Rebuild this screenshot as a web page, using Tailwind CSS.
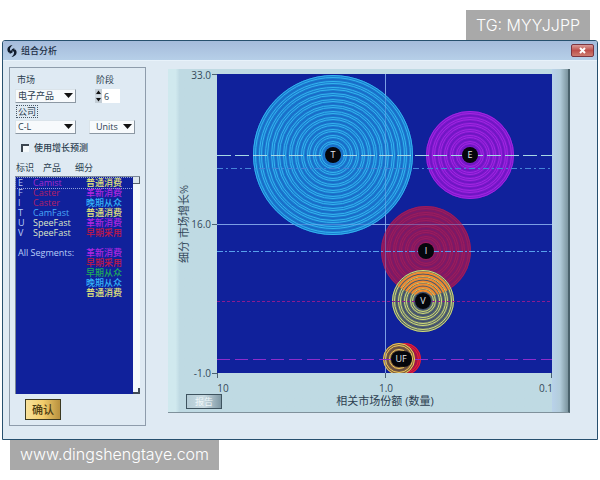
<!DOCTYPE html>
<html lang="zh-CN">

<head>
    <meta charset="UTF-8">
    <title>组合分析</title>
    <script src="https://cdn.jsdelivr.net/npm/@tailwindcss/browser@4"></script>
</head>

<body class="bg-white font-['Open_Sans','Noto_Sans_CJK_SC',sans-serif] text-[9px] leading-[10px] text-[#2c3e50]">
    <header class="flex justify-end pt-[10px] pr-[10px]">
        <div class="bg-[#a9a9a9] text-white h-[30px] px-[10px] text-[16px] leading-[30px] font-['Inter','Liberation_Sans',sans-serif] font-light">TG: MYYJJPP</div>
    </header>

    <main class="mx-[2px] border border-[#27506e] rounded-t-[3px] bg-[#dfeaf3] overflow-hidden">
        <!-- Title bar -->
        <div class="flex items-center h-[19px] pl-[4px] pr-[3px] bg-linear-to-b from-[#a5bbdb] to-[#b6cfe8]">
            <svg class="w-[10px] h-[12px] mr-[4px]" viewBox="0 0 10 12" fill="#111c2c">
                <path d="M5.500 0C1.500 .8 0 3 .5 5.500C.8 7 1.800 7.800 3 7.800L2.500 9L5.500 7.500L4.500 4.500L3.800 5.800C2.500 5.500 2.500 2.500 5.500 0Z" />
                <path d="M4.500 12C8.500 11.200 10 9 9.500 6.500C9.200 5 8.200 4.200 7 4.200L7.500 3L4.800 4.200L5.800 7.500L6.300 6.200C7.500 6.500 7.500 9.500 4.500 12Z" />
            </svg>
            <h1 class="grow font-medium text-[#1d3047]">组合分析</h1>
            <button aria-label="关闭" class="flex items-center justify-center w-[23px] h-[13px] border border-[#7b3540] rounded-[2px] bg-linear-to-b from-[#d99a98] via-[#bd4f4b] to-[#cc7b70]">
                <svg class="w-[7px] h-[7px]" viewBox="0 0 7 7" stroke="#fff" stroke-width="2">
                    <path d="M1 1L6 6M6 1L1 6" />
                </svg>
            </button>
        </div>

        <div class="flex items-start gap-[22px] pl-[6px] pr-[27px] pt-[6px] pb-[13px] border-t border-[#e8f2fa]">
            <!-- Settings -->
            <form class="flex flex-col shrink-0 w-[137px] border border-[#8e9cab] pt-[5px] px-[5px] pb-[5px]">
                <div class="grid grid-cols-[74px_1fr] gap-y-[2px]">
                    <label for="market" class="h-[14px] leading-[14px] pl-[2px]">市场</label>
                    <label for="period" class="h-[14px] leading-[14px] pl-[7px]">阶段</label>

                    <div class="relative w-[61px]">
                        <select id="market" class="block appearance-none w-full h-[14px] pl-[2px] leading-[12px] bg-[#f7fafc] border border-[#dbe4ea] border-b-[#8c98a3] border-r-[#8c98a3]">
                            <option>电子产品</option>
                        </select>
                        <svg class="absolute right-[3px] top-[4px] w-[9px] h-[5px] pointer-events-none" viewBox="0 0 9 5"><path d="M0 0H9L4.500 5Z" fill="#111" /></svg>
                    </div>
                    <div class="flex items-center pl-[6px]">
                        <svg class="w-[7px] h-[14px]" viewBox="0 0 7 14">
                            <path d="M0 0H7V6.500H0ZM0 7.500H7V14H0Z" fill="#c4ced6" />
                            <path d="M1 5L3.500 1.500L6 5ZM1 9L3.500 12.500L6 9Z" fill="#111" />
                        </svg>
                        <input id="period" type="text" value="6" class="w-[18px] h-[14px] pl-[2px] bg-white">
                    </div>

                    <label for="company" class="h-[13px] leading-[11px] ml-[1px] px-px border border-dotted border-[#4a5866] justify-self-start">公司</label>
                    <div class="relative w-[61px] col-start-1">
                        <select id="company" class="block appearance-none w-full h-[14px] pl-[2px] leading-[12px] bg-[#f7fafc] border border-[#dbe4ea] border-b-[#8c98a3] border-r-[#8c98a3]">
                            <option>C-L</option>
                        </select>
                        <svg class="absolute right-[3px] top-[4px] w-[9px] h-[5px] pointer-events-none" viewBox="0 0 9 5"><path d="M0 0H9L4.500 5Z" fill="#111" /></svg>
                    </div>
                    <div class="relative w-[46px]">
                        <select id="units" aria-label="单位" class="block appearance-none w-full h-[14px] pl-[6px] leading-[12px] bg-[#f7fafc] border border-[#dbe4ea] border-b-[#8c98a3] border-r-[#8c98a3]">
                            <option>Units</option>
                        </select>
                        <svg class="absolute right-[3px] top-[4px] w-[9px] h-[5px] pointer-events-none" viewBox="0 0 9 5"><path d="M0 0H9L4.500 5Z" fill="#111" /></svg>
                    </div>
                </div>

                <label class="flex items-center gap-[5px] h-[10px] mt-[9px] pl-[6px] font-medium">
                    <input type="checkbox" class="appearance-none w-[8px] h-[8px] bg-[#f4f8fa] border-t-2 border-l-2 border-[#3c4650]">
                    使用增长预测
                </label>

                <!-- Product list -->
                <div class="flex h-[10px] mt-[10px] pl-px">
                    <span class="w-[27px]">标识</span>
                    <span class="w-[32px]">产品</span>
                    <span>细分</span>
                </div>
                <div class="flex h-[218px] mt-[3px] w-[125px] border-t border-l border-[#7a8796]">
                    <div class="grow min-w-0 pt-px bg-[#10219b] text-[#b9cdf7]">
                        <table class="w-full table-fixed text-left font-medium">
                            <colgroup>
                                <col class="w-[17px]">
                                <col class="w-[53px]">
                                <col>
                            </colgroup>
                            <tbody id="products"></tbody>
                        </table>
                    </div>
                    <div class="flex flex-col justify-between shrink-0 w-[7px] bg-[#f3f8fb]">
                        <span class="h-[7px] border-r border-b border-[#56606a] bg-[#dbe5ec]"></span>
                        <span class="h-[6px] border-r-2 border-b-2 border-[#3f4a55]"></span>
                    </div>
                </div>
                <button type="button" class="self-start w-[36px] h-[21px] mt-[5px] ml-[10px] border border-[#3c3a22] bg-linear-to-r from-[#f8e19a] via-[#f2cd6c] to-[#b8913e] text-[11px] font-medium text-[#4a3a12]">确认</button>
            </form>

            <!-- Chart -->
            <section class="flex grow min-w-0 mt-[2px] border-b border-b-[#7f919b] border-r-2 border-r-[#4a626c]">
                <div class="grow min-w-0 pb-[3px] bg-linear-to-r from-[#d0e9ee] from-2% via-[#bfdae3] via-3% to-[#bfdae3]">
                    <svg class="block w-full overflow-visible" viewBox="0 0 384 325" font-size="10" fill="#34495a">
                        <defs>
                            <clipPath id="plot"><path d="M49 5H384V304H49Z" /></clipPath>
                        </defs>
                        <path d="M49 5H384V304H49Z" fill="#10219b" />
                        <path d="M44 5.500H49M44 155.500H49M44 304.500H49M49.500 304V309M217.500 304V309M383.500 304V309" stroke="#4b6272" />
                        <g clip-path="url(#plot)">
                            <path d="M49 155.500H384M217.500 5V304" stroke="#6f8fdc" />
                            <g id="bubbles" fill="none"></g>
                            <path d="M49 155.500H384M217.500 5V304" stroke="#8fb4f0" stroke-opacity=".4" />
                            <g id="levels" fill="none"></g>
                            <g id="marks" text-anchor="middle" font-size="9"></g>
                        </g>
                        <g text-anchor="end">
                            <text x="43" y="10">33.0</text>
                            <text x="43" y="159">16.0</text>
                            <text x="43" y="308">-1.0</text>
                        </g>
                        <g text-anchor="middle">
                            <text x="55" y="323">10</text>
                            <text x="218" y="323">1.0</text>
                            <text x="378" y="323">0.1</text>
                            <text transform="translate(20 155) rotate(-90)" font-size="11">细分 市场增长%</text>
                        </g>
                    </svg>
                    <div class="grid grid-cols-[52px_1fr_20px] h-[15px] pl-[18px]">
                        <button type="button" class="w-[36px] h-[15px] border border-[#3e535f] bg-linear-to-r from-[#b4ccd6] via-[#c9dae1] to-[#7f98a4] text-[#eef6f8]">报告</button>
                        <div class="pt-[2px] text-center text-[11px]">相关市场份额 (数量)</div>
                    </div>
                </div>
                <div class="shrink-0 w-[16px] bg-linear-to-r from-[#b9d2ea] via-[#b3cddb] to-[#7b949e]"></div>
            </section>
        </div>
    </main>

    <footer class="flex pl-[10px]">
        <div class="bg-[#a9a9a9] text-white h-[30px] px-[10px] text-[16px] leading-[28px] font-['Inter','Liberation_Sans',sans-serif] font-light">www.dingshengtaye.com</div>
    </footer>

    <script>
        const segments = {
            normal: ['普通消费', '#e6e67a'],
            reform: ['革新消费', '#b026e0'],
            late: ['晚期从众', '#35b4f5'],
            early: ['早期采用', '#c01848'],
            mass: ['早期从众', '#1fae5a'],
        };

        // id, product, product colour, segment
        const products = [
            ['E', 'Camist', '#a32ad0', 'normal'],
            ['F', 'Caster', '#b02068', 'reform'],
            ['I', 'Caster', '#b02068', 'late'],
            ['T', 'CamFast', '#4aa8f8', 'normal'],
            ['U', 'SpeeFast', '#dfe6c8', 'reform'],
            ['V', 'SpeeFast', '#dfe6c8', 'early'],
            ['', '', '', ''],
            ['All Segments:', '', '', 'reform'],
            ['', '', '', 'early'],
            ['', '', '', 'mass'],
            ['', '', '', 'late'],
            ['', '', '', 'normal'],
        ];

        document.getElementById('products').innerHTML = products.map(([id, name, color, seg], i) => {
            const [label, segColor] = segments[seg] || ['', ''];
            const first = id.length > 1
                ? `<td colspan="2" class="pl-[2px] whitespace-nowrap">${id}</td>`
                : `<td class="pl-[2px]">${id}</td><td style="color:${color}">${name}</td>`;
            return `<tr class="h-[10px] ${i === 0 ? 'outline-1 outline-dotted outline-[#8fa0d8]' : ''}">${first}<td class="whitespace-nowrap" style="color:${segColor}">${label}</td></tr>`;
        }).join('');

        // x, y, radius, fill, ring colour, ring gap, dark ring colour
        const bubbles = [
            [165, 86, 80, '#1a7ad0', '#34b4ee', 2, '#1a68c4'],
            [302, 86, 44, '#7c18cc', '#a226e2', 2, '#6a16c0'],
            [258, 182, 45, '#84195f', '#9c1c60', 2, '#761a70'],
            [237, 290, 16, '#b01440', '#e8203c', 2, '#901450'],
            [255, 232, 31, '#5c6a6c', '#d0dc78', 2, '#38486c'],
            [231, 290, 16, '#7c5a40', '#f0cc58', 2, '#5c4a48'],
        ];

        let rings = '';
        bubbles.forEach(([x, y, r, fill, ring, gap, dark]) => {
            rings += `<circle cx="${x}" cy="${y}" r="${r}" fill="${fill}"/>`;
            for (let i = 0, k = r - 0.5; k > 8; k -= gap, i++) {
                rings += `<circle cx="${x}" cy="${y}" r="${k}" stroke="${i % 3 === 2 ? dark : ring}"/>`;
            }
        });
        // Part of V that lies over I
        rings += '<clipPath id="overI"><circle cx="258" cy="182" r="45"/></clipPath><g clip-path="url(#overI)">';
        for (let k = 28.5; k > 8; k -= 3) {
            rings += `<circle cx="255" cy="232" r="${k}" stroke="#f08a30" stroke-width="2"/>`;
        }
        rings += '</g>';
        document.getElementById('bubbles').innerHTML = rings;

        // y, colour, dash pattern
        const levels = [
            [86.5, '#a8d8e4', '14 4'],
            [99.5, '#4684d8', '6 3 2 3'],
            [182.5, '#58a0ec', '6 2 2 2'],
            [232.5, '#8a1c90', '3 2'],
            [290.5, '#8c2ccc', '13 5'],
        ];
        document.getElementById('levels').innerHTML = levels.map(([y, color, dash]) =>
            `<path d="M49 ${y}H384" stroke="${color}" stroke-dasharray="${dash}"/>`).join('');

        const marks = [[165, 86, 'T'], [302, 86, 'E'], [258, 182, 'I'], [255, 232, 'V'], [236, 290, ''], [231, 290, 'UF']];
        document.getElementById('marks').innerHTML = marks.map(([x, y, id]) =>
            `<circle cx="${x}" cy="${y}" r="8" fill="#05060c"/><text x="${x + (id.length > 1 ? 2 : 0)}" y="${y + 3}" fill="#e4e8ec">${id}</text>`).join('');
    </script>
</body>

</html>
